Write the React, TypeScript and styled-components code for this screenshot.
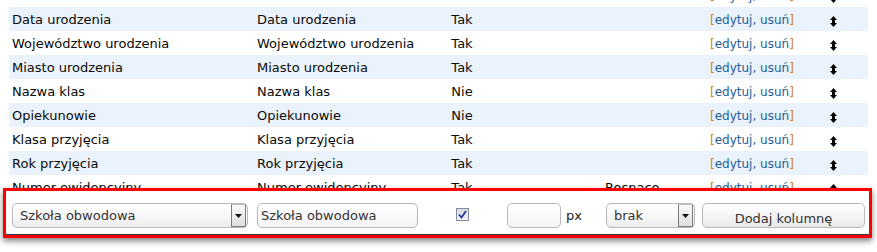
import React from 'react';
import styled, { createGlobalStyle } from 'styled-components';

const Global = createGlobalStyle`
  html, body { margin: 0; padding: 0; background: #fff; }
  body {
    font-family: "DejaVu Sans", Verdana, sans-serif;
    font-size: 13px;
    color: #0a0a0a;
    overflow: hidden;
  }
`;

const Page = styled.div`
  position: relative;
  width: 877px;
  height: 252px;
  overflow: hidden;
`;

const Table = styled.div`
  margin: -17px 0 0 9px;
  width: 859px;
  display: flex;
  flex-direction: column;
`;

const Row = styled.div<{ $striped: boolean }>`
  display: grid;
  grid-template-columns: 245px 162px 92px 199px 93px 68px;
  height: 24px;
  align-items: center;
  background: ${(p) => (p.$striped ? '#eaf3fb' : '#fff')};
`;

const Cell = styled.div<{ $pad?: number; $center?: boolean }>`
  padding-left: ${(p) => (p.$pad ?? 3)}px;
  text-align: ${(p) => (p.$center ? 'center' : 'left')};
  white-space: nowrap;
  line-height: 24px;
  padding-top: 1px;
`;

const Actions = styled.div`
  padding-left: 3px;
  padding-top: 1px;
  font-size: 12px;
  white-space: nowrap;
  line-height: 24px;
  color: #2f5f8f;
`;

const Bracket = styled.span`
  color: #c9822f;
`;

const Link = styled.a`
  color: #24609a;
  text-decoration: none;
`;

const SortCell = styled.div`
  display: flex;
  justify-content: center;
  padding-right: 2px;
  padding-top: 3px;
`;

const Panel = styled.div`
  position: absolute;
  left: 3px;
  top: 188px;
  width: 869px;
  height: 50px;
  box-sizing: border-box;
  border: 3px solid #ff0000;
  background: #fff;
  box-shadow: 0 3px 6px rgba(0, 0, 0, 0.5), inset 0 -2px 0 -1px #2c3552;
  display: flex;
  align-items: flex-start;
  padding: 12px 0 0 6px;
`;

const SelectBox = styled.div<{ $w: number; $ml?: number }>`
  box-sizing: border-box;
  width: ${(p) => p.$w}px;
  margin-left: ${(p) => p.$ml ?? 0}px;
  height: 25px;
  border: 1px solid #b9b9b9;
  border-radius: 5px;
  background: linear-gradient(#ffffff, #f6f6f6 60%, #ececec);
  display: flex;
  align-items: center;
  padding-left: 7px;
  padding-right: 1px;
  color: #333;
  white-space: nowrap;
`;

const SelectText = styled.span`
  flex: 1;
`;

const DropButton = styled.div`
  box-sizing: border-box;
  width: 15px;
  height: 23px;
  border: 1px solid #7a7a7a;
  border-top-color: #bdbdbd;
  background: linear-gradient(#fafafa, #dedede);
  display: flex;
  align-items: center;
  justify-content: center;
`;

const TextInput = styled.div<{ $w: number; $ml: number }>`
  box-sizing: border-box;
  width: ${(p) => p.$w}px;
  margin-left: ${(p) => p.$ml}px;
  height: 25px;
  border: 1px solid #b9b9b9;
  border-radius: 5px;
  background: linear-gradient(#ffffff, #f3f3f3);
  display: flex;
  align-items: center;
  padding-left: 3px;
  color: #333;
  white-space: nowrap;
`;

const Check = styled.div`
  box-sizing: border-box;
  width: 13px;
  height: 13px;
  margin-left: 38px;
  margin-top: 5px;
  border: 1px solid #858aa3;
  background: linear-gradient(#d9dbe4, #f5f5f7);
  display: flex;
  align-items: center;
  justify-content: center;
`;

const Unit = styled.div`
  width: 45px;
  box-sizing: border-box;
  padding-left: 5px;
  line-height: 25px;
  color: #222;
`;

const Button = styled.button`
  box-sizing: border-box;
  width: 163px;
  height: 25px;
  margin-left: 7px;
  border: 1px solid #b9b9b9;
  border-radius: 5px;
  background: linear-gradient(#ffffff, #f3f3f3 60%, #e9e9e9);
  font-family: "DejaVu Sans", Verdana, sans-serif;
  font-size: 13px;
  color: #333;
  padding: 7px 0 0;
  line-height: 16px;
`;

const SortIcon = () => (
  <svg width="7" height="11" viewBox="0 0 7 11">
    <polygon points="0,4 3.5,0 7,4" fill="#000" />
    <rect x="2" y="3.5" width="3" height="4" fill="#000" />
    <polygon points="0,7 3.5,11 7,7" fill="#000" />
  </svg>
);

const DownTriangle = () => (
  <svg width="7" height="4" viewBox="0 0 7 4">
    <polygon points="0,0 7,0 3.5,4" fill="#111" />
  </svg>
);

const CheckMark = () => (
  <svg width="9" height="9" viewBox="0 0 9 9">
    <path d="M1 4.5 L3.5 7.5 L8 1" stroke="#2236a0" strokeWidth="1.8" fill="none" />
  </svg>
);

type RowData = { label: string; required: string; sort?: string };

const rows: RowData[] = [
  { label: 'Ulica', required: 'Tak' },
  { label: 'Data urodzenia', required: 'Tak' },
  { label: 'Województwo urodzenia', required: 'Tak' },
  { label: 'Miasto urodzenia', required: 'Tak' },
  { label: 'Nazwa klas', required: 'Nie' },
  { label: 'Opiekunowie', required: 'Nie' },
  { label: 'Klasa przyjęcia', required: 'Tak' },
  { label: 'Rok przyjęcia', required: 'Tak' },
  { label: 'Numer ewidencyjny', required: 'Tak', sort: 'Rosnąco' },
];

export default function App() {
  return (
    <Page>
      <Global />
      <Table>
        {rows.map((r, i) => (
          <Row key={r.label} $striped={i % 2 === 1}>
            <Cell>{r.label}</Cell>
            <Cell>{r.label}</Cell>
            <Cell $pad={0} $center>
              {r.required}
            </Cell>
            <Cell $pad={97}>{r.sort ?? ''}</Cell>
            <Actions>
              <Bracket>[</Bracket>
              <Link href="#">edytuj</Link>, <Link href="#">usuń</Link>
              <Bracket>]</Bracket>
            </Actions>
            <SortCell>
              <SortIcon />
            </SortCell>
          </Row>
        ))}
      </Table>
      <Panel>
        <SelectBox $w={236}>
          <SelectText>Szkoła obwodowa</SelectText>
          <DropButton>
            <DownTriangle />
          </DropButton>
        </SelectBox>
        <TextInput $w={161} $ml={9}>
          Szkoła obwodowa
        </TextInput>
        <Check>
          <CheckMark />
        </Check>
        <TextInput $w={54} $ml={38} />
        <Unit>px</Unit>
        <SelectBox $w={89}>
          <SelectText>brak</SelectText>
          <DropButton>
            <DownTriangle />
          </DropButton>
        </SelectBox>
        <Button>Dodaj kolumnę</Button>
      </Panel>
    </Page>
  );
}
